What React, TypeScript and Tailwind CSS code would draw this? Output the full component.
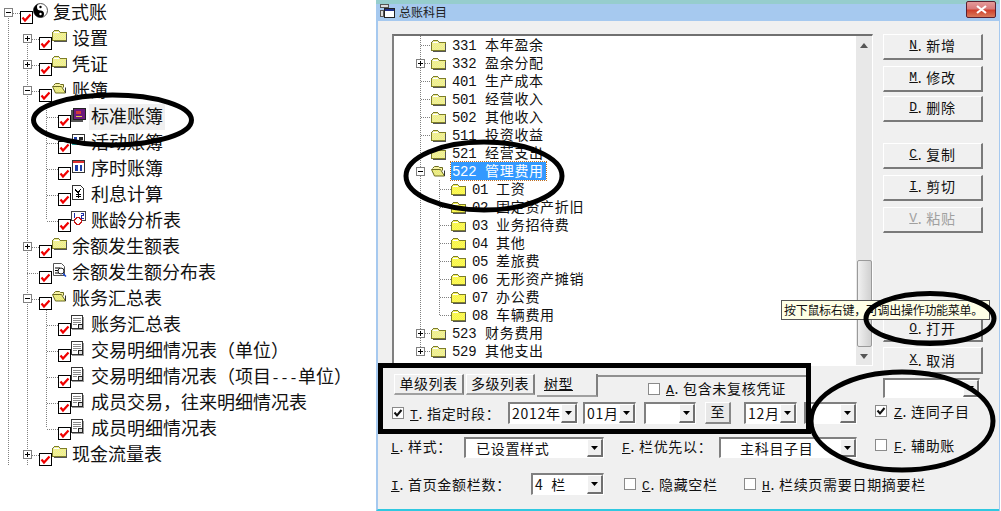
const cjk = "font-['Noto_Sans_CJK_SC',sans-serif]";

type Ico = 'yin' | 'folder' | 'open' | 'book' | 'act' | 'cal' | 'yen' | 'clock' | 'doc' | 'find';

const ledger: { level: number; exp?: '+' | '-'; icon: Ico; text: string; sel?: boolean }[] = [
  { level: 0, exp: '-', icon: 'yin', text: '复式账' },
  { level: 1, exp: '+', icon: 'folder', text: '设置' },
  { level: 1, exp: '+', icon: 'folder', text: '凭证' },
  { level: 1, exp: '-', icon: 'open', text: '账簿' },
  { level: 2, icon: 'book', text: '标准账簿', sel: true },
  { level: 2, icon: 'act', text: '活动账簿' },
  { level: 2, icon: 'cal', text: '序时账簿' },
  { level: 2, icon: 'yen', text: '利息计算' },
  { level: 2, icon: 'clock', text: '账龄分析表' },
  { level: 1, exp: '+', icon: 'folder', text: '余额发生额表' },
  { level: 1, icon: 'find', text: '余额发生额分布表' },
  { level: 1, exp: '-', icon: 'open', text: '账务汇总表' },
  { level: 2, icon: 'doc', text: '账务汇总表' },
  { level: 2, icon: 'doc', text: '交易明细情况表（单位）' },
  { level: 2, icon: 'doc', text: '交易明细情况表（项目---单位）' },
  { level: 2, icon: 'doc', text: '成员交易，往来明细情况表' },
  { level: 2, icon: 'doc', text: '成员明细情况表' },
  { level: 1, exp: '+', icon: 'folder', text: '现金流量表' },
];

const accounts: { code: string; text: string; exp?: '+' | '-'; child?: boolean; open?: boolean; sel?: boolean }[] = [
  { code: '331', text: '本年盈余' },
  { code: '332', text: '盈余分配', exp: '+' },
  { code: '401', text: '生产成本' },
  { code: '501', text: '经营收入' },
  { code: '502', text: '其他收入' },
  { code: '511', text: '投资收益' },
  { code: '521', text: '经营支出' },
  { code: '522', text: '管理费用', exp: '-', open: true, sel: true },
  { code: '01', text: '工资', child: true },
  { code: '02', text: '固定资产折旧', child: true },
  { code: '03', text: '业务招待费', child: true },
  { code: '04', text: '其他', child: true },
  { code: '05', text: '差旅费', child: true },
  { code: '06', text: '无形资产摊销', child: true },
  { code: '07', text: '办公费', child: true },
  { code: '08', text: '车辆费用', child: true },
  { code: '523', text: '财务费用', exp: '+' },
  { code: '529', text: '其他支出', exp: '+' },
];

function Expander({ type }: { type?: '+' | '-' }) {
  if (!type) return <span className="block w-[9px] h-[9px] shrink-0" />;
  return (
    <svg width="9" height="9" viewBox="0 0 9 9" className="block shrink-0" shapeRendering="crispEdges">
      <rect x="0.5" y="0.5" width="8" height="8" fill="#fff" stroke="#808080" />
      <path d="M2 4.5h5" stroke="#000" />
      {type === '+' && <path d="M4.5 2v5" stroke="#000" />}
    </svg>
  );
}

function RedCheck() {
  return (
    <svg width="13" height="13" viewBox="0 0 13 13" className="block shrink-0">
      <rect x="0.5" y="0.5" width="12" height="12" fill="#fff" stroke="#000" />
      <path d="M2.5 6.5l2.5 3 5.5-6" fill="none" stroke="#f00000" strokeWidth="2.2" />
    </svg>
  );
}

function Dither({ id, a, b }: { id: string; a: string; b: string }) {
  return (
    <defs>
      <pattern id={id} width="2" height="2" patternUnits="userSpaceOnUse">
        <rect width="2" height="2" fill={a} />
        <rect width="1" height="1" fill={b} />
        <rect x="1" y="1" width="1" height="1" fill={b} />
      </pattern>
    </defs>
  );
}

function Folder({ open, solid }: { open?: boolean; solid?: boolean }) {
  if (open) {
    return (
      <svg width="15" height="14" viewBox="0 0 15 14" className="block shrink-0">
        <Dither id="dOpen" a="#ffff66" b="#d8d8a0" />
        <path d="M1.5 4.5l2-2h4l1 1h3v3" fill="#f6f2a0" stroke="#6b6b20" />
        <path d="M0.5 5.5h9l4 6.5h-10z" fill="url(#dOpen)" stroke="#6b6b20" />
        <path d="M13.5 6.5v5.5" stroke="#333" />
      </svg>
    );
  }
  const id = solid ? 'dSolid' : 'dPale';
  return (
    <svg width="15" height="13" viewBox="0 0 15 13" className="block shrink-0" shapeRendering="crispEdges">
      {solid ? <Dither id={id} a="#ffff33" b="#f4ee70" /> : <Dither id={id} a="#ffff66" b="#e0e0c0" />}
      <path d="M0.5 11.5v-8l2-2h4l2 2h5.5v8z" fill={`url(#${id})`} stroke="#7d7d2a" />
      <path d="M1.5 12.5h13.5M14.5 4.5v8" stroke="#555" />
      <path d="M1.5 3.5h5" stroke="#fff" />
    </svg>
  );
}

function LedgerIcon({ icon }: { icon: Ico }) {
  if (icon === 'folder') return <Folder />;
  if (icon === 'open') return <Folder open />;
  if (icon === 'yin') {
    return (
      <svg width="15" height="15" viewBox="0 0 15 15" className="block shrink-0">
        <circle cx="7.5" cy="7.5" r="7" fill="#fff" stroke="#555" />
        <path d="M7.5 0.5a7 7 0 0 0 0 14a3.5 3.5 0 0 0 0-7a3.5 3.5 0 0 1 0-7z" fill="#000" />
        <circle cx="7.5" cy="4" r="1.2" fill="#000" />
        <circle cx="7.5" cy="11" r="1.2" fill="#fff" />
      </svg>
    );
  }
  if (icon === 'book') {
    return (
      <svg width="15" height="15" viewBox="0 0 15 15" className="block shrink-0" shapeRendering="crispEdges">
        <path d="M2 1h12v11h-12z" fill="#6c1a7c" stroke="#222" />
        <path d="M1 3v11h11" fill="none" stroke="#555" strokeWidth="1.5" />
        <path d="M5 4h5v3h-5z" fill="#d23a3a" />
        <path d="M5 9h6" stroke="#e6c84a" />
      </svg>
    );
  }
  if (icon === 'act') {
    return (
      <svg width="15" height="15" viewBox="0 0 15 15" className="block shrink-0" shapeRendering="crispEdges">
        <rect x="1.5" y="1.5" width="12" height="10" fill="#fff" stroke="#333" />
        <path d="M3 4h3v3h-3z" fill="#1f3fa8" />
        <path d="M8 4h4v3h-4z" fill="#222" />
        <path d="M1 9h5v3h-5z" fill="#28b0b0" />
      </svg>
    );
  }
  if (icon === 'cal') {
    return (
      <svg width="15" height="15" viewBox="0 0 15 15" className="block shrink-0" shapeRendering="crispEdges">
        <rect x="1.5" y="1.5" width="12" height="12" fill="#fff" stroke="#333" />
        <path d="M2 2h11v2h-11z" fill="#e03030" />
        <path d="M4 6h3v6h-3z" fill="#1f3fa8" />
        <path d="M9 6h2v6h-2z" fill="#1f3fa8" />
      </svg>
    );
  }
  if (icon === 'yen') {
    return (
      <svg width="15" height="15" viewBox="0 0 15 15" className="block shrink-0" shapeRendering="crispEdges">
        <path d="M1.5 0.5h8l3 3v11h-11z" fill="#fff" stroke="#333" />
        <path d="M4 4l3 4l3-4M7 8v5M4.5 9h5M4.5 11h5" fill="none" stroke="#000" />
      </svg>
    );
  }
  if (icon === 'clock') {
    return (
      <svg width="15" height="15" viewBox="0 0 15 15" className="block shrink-0" shapeRendering="crispEdges">
        <rect x="0.5" y="0.5" width="14" height="9" fill="#fff" stroke="#444" />
        <path d="M3 2v5M10 2h2v2h-2v3h3" fill="none" stroke="#1f2fa8" />
        <circle cx="7" cy="10" r="3.5" fill="#fff" stroke="#c81818" strokeWidth="1.5" />
      </svg>
    );
  }
  if (icon === 'find') {
    return (
      <svg width="16" height="15" viewBox="0 0 16 15" className="block shrink-0">
        <path d="M1.5 0.5h8l3 3v9h-11z" fill="#fff" stroke="#555" />
        <path d="M3 5h5M3 7.5h3M3 10h5" stroke="#000" />
        <circle cx="9" cy="8" r="3" fill="#fff" stroke="#222" />
        <path d="M11 10.5l3 3" stroke="#1545d0" strokeWidth="1.5" />
      </svg>
    );
  }
  return (
    <svg width="15" height="15" viewBox="0 0 15 15" className="block shrink-0" shapeRendering="crispEdges">
      <path d="M0.5 0.5h11v13h-11z" fill="#fff" stroke="#333" />
      <path d="M2 3h8M2 5h8M2 7h8M2 9h4" stroke="#8a8a8a" />
      <path d="M1 14.5h11M12.5 2v13" stroke="#999" />
      <rect x="7.5" y="9.5" width="4" height="4" fill="#ddd" stroke="#222" />
    </svg>
  );
}

function LedgerRow({ item }: { item: (typeof ledger)[number] }) {
  const pad = ['pl-[4px]', 'pl-[23px]', 'pl-[42px]'][item.level];
  const parts = item.text.split('---');
  return (
    <div className={`flex h-[26px] ${pad}`}>
      <span className="mt-[8px] w-[9px] shrink-0"><Expander type={item.exp} /></span>
      <span className="mt-[11px] ml-[7px] w-[13px] shrink-0"><RedCheck /></span>
      <span className="mt-[3px] w-[15px] shrink-0"><LedgerIcon icon={item.icon} /></span>
      <span
        className={`ml-[3px] px-[2px] h-[26px] leading-[23px] text-[18px] whitespace-nowrap text-[#111] ${item.sel ? 'bg-[#f0f0f0]' : ''}`}
      >
        {parts[0]}
        {parts.length > 1 && <span className="font-['Liberation_Mono',monospace] text-[15px]">---</span>}
        {parts[1]}
      </span>
    </div>
  );
}

function AccountRow({ item }: { item: (typeof accounts)[number] }) {
  return (
    <div className={`flex h-[18px] items-center ${item.child ? 'pl-[57px]' : 'pl-[22px]'}`}>
      {!item.child && <Expander type={item.exp} />}
      <span className={`w-[15px] shrink-0 ${item.child ? '' : 'ml-[6px]'}`}>
        <Folder open={item.open} solid={item.child} />
      </span>
      <span
        className={`flex items-baseline h-[18px] ml-[5px] pl-[1px] pr-[1px] w-[95px] whitespace-nowrap text-[14px] leading-[16px] tracking-[0.7px] ${
          item.sel ? 'bg-[#3399ff] text-white outline-1 outline-dotted outline-[#c07020]' : 'text-[#111]'
        }`}
      >
        <span className={`${item.child ? 'w-[24px]' : 'w-[33px]'} shrink-0 font-['Liberation_Mono',monospace] text-[14px] tracking-[-0.3px]`}>
          {item.code}
        </span>
        <span>{item.text}</span>
      </span>
    </div>
  );
}

function SideButton({ k, text, disabled, className = '' }: { k: string; text: string; disabled?: boolean; className?: string }) {
  return (
    <div
      className={`flex h-[26px] w-[100px] items-center justify-center border-t border-l border-t-white border-l-white border-r-2 border-b-2 border-r-[#7a7a7a] border-b-[#7a7a7a] bg-[#f0f0f0] pb-[2px] text-[14px] tracking-[0.7px] ${
        disabled ? 'text-[#a0a0a0]' : 'text-[#111]'
      } ${className}`}
    >
      <u className="font-['Liberation_Mono',monospace] text-[13px]">{k}</u>.&nbsp;{text}
    </div>
  );
}

function Combo({ value, className = '', textClass = 'pl-[2px]' }: { value?: string; className?: string; textClass?: string }) {
  return (
    <div
      className={`flex shrink-0 items-stretch border-t-2 border-l-2 border-t-[#808080] border-l-[#808080] border-r border-b border-r-white border-b-white bg-white text-[14px] tracking-[0.7px] text-[#111] ${className}`}
    >
      <span className={`flex-1 whitespace-pre leading-[18px] ${textClass}`}>{value}</span>
      <span className="flex w-[16px] items-center justify-center border-r-2 border-b-2 border-r-[#707070] border-b-[#707070] border-t border-l border-t-white border-l-white bg-[#f0f0f0]">
        <svg width="7" height="4" viewBox="0 0 7 4"><path d="M0 0h7L3.5 4z" fill="#000" /></svg>
      </span>
    </div>
  );
}

function Check({ on }: { on?: boolean }) {
  return (
    <svg width="12" height="12" viewBox="0 0 12 12" className="block shrink-0" shapeRendering="crispEdges">
      <rect x="0.5" y="0.5" width="11" height="11" fill="#fff" stroke="#8a8a8a" />
      {on && <path d="M2.5 5.5l2.5 3 4.5-5.5" fill="none" stroke="#111" strokeWidth="2" shapeRendering="auto" />}
    </svg>
  );
}

function Label({ k, text, className = '' }: { k: string; text: string; className?: string }) {
  return (
    <span className={`whitespace-nowrap text-[14px] tracking-[0.7px] text-[#111] ${className}`}>
      <u className="font-['Liberation_Mono',monospace] text-[13px]">{k}</u>.&nbsp;{text}
    </span>
  );
}

function Tab({ text, className = '' }: { text: string; className?: string }) {
  return (
    <div
      className={`flex h-[21px] items-center justify-center border-t border-l border-t-white border-l-white border-r-2 border-b-2 border-r-[#808080] border-b-[#a0a0a0] bg-[#f0f0f0] pb-[2px] text-[14px] tracking-[0.5px] text-[#111] ${className}`}
    >
      {text}
    </div>
  );
}

export default function App() {
  return (
    <div className={`relative flex h-[511px] w-[1001px] overflow-hidden bg-white ${cjk}`}>
      {/* left tree */}
      <div className="relative w-[376px] shrink-0">
        <svg width="376" height="511" className="absolute left-0 top-0" shapeRendering="crispEdges">
          <g stroke="#808080" strokeDasharray="1 1" fill="none">
            <path d="M8.5 18v447M27.5 44v421M46.5 104v116M46.5 310v118" />
            <path d="M13 13h7M32 39h7M32 65h7M32 91h7M32 247h7M27 273h12M32 299h7M32 455h7" />
            <path d="M47 117h11M47 143h11M47 169h11M47 195h11M47 221h11M47 325h11M47 351h11M47 377h11M47 403h11M47 429h11" />
          </g>
        </svg>
        <div className="relative">
          {ledger.map((it) => (
            <LedgerRow key={it.text + it.level + it.icon} item={it} />
          ))}
        </div>
      </div>

      {/* dialog */}
      <div className="flex w-[624px] shrink-0 flex-col border-r border-r-[#a6c9ef]">
        <div className="h-[4px] bg-[#96cdcd]" />
        <div className="flex h-[17px] items-center bg-[#a6c9ef]">
          <svg width="15" height="14" viewBox="0 0 15 14" className="ml-[4px] mt-[-3px]" shapeRendering="crispEdges">
            <path d="M0.5 0.5h8v3h-8zM0.5 6.5h3v6h-3z" fill="#ddd" stroke="#555" />
            <rect x="4.5" y="4.5" width="10" height="9" fill="#fff" stroke="#222" />
            <path d="M5 5h9v2h-9z" fill="#20308a" />
          </svg>
          <span className="ml-[4px] mt-[-1px] text-[12px] text-[#222]">总账科目</span>
          <div className="ml-auto mr-[3px] mt-[-6px] flex h-[17px] w-[30px] items-center justify-center rounded-[2px] border border-[#5a2030] bg-[linear-gradient(#e49a9a_0%,#d87a7a_45%,#d0402c_55%,#d87a5a_100%)]">
            <svg width="11" height="9" viewBox="0 0 11 9"><path d="M1 1l9 7M10 1l-9 7" stroke="#fff" strokeWidth="2.2" /></svg>
          </div>
        </div>

        <div className="flex flex-1 flex-col border-l-2 border-b-2 border-l-[#a6c9ef] border-b-[#30c8e0] bg-[#f0f0f0]">
          <div className="flex h-[353px] pl-[14px] pt-[13px]">
            {/* account list */}
            <div className="relative h-[332px] w-[481px] shrink-0 border-t-2 border-l-2 border-t-[#707070] border-l-[#808080] border-r border-b border-r-white border-b-white bg-white">
              <svg width="464" height="330" className="absolute left-0 top-0" shapeRendering="crispEdges">
                <g stroke="#808080" strokeDasharray="1 1" fill="none">
                  <path d="M26.5 0v315M45.5 144v135" />
                  <path d="M27 9h10M31 27h6M27 45h10M27 63h10M27 81h10M27 99h10M27 117h10" />
                  <path d="M46 153h11M46 171h11M46 189h11M46 207h11M46 225h11M46 243h11M46 261h11M46 279h11M31 297h6M31 315h6" />
                </g>
              </svg>
              <div className="relative">
                {accounts.map((it) => (
                  <AccountRow key={it.code} item={it} />
                ))}
              </div>
              {/* scrollbar */}
              <div className="absolute right-0 top-0 flex h-full w-[16px] flex-col items-center bg-[#e8e8e8]">
                <svg width="8" height="5" viewBox="0 0 8 5" className="mt-[7px]"><path d="M0 5h8L4 0z" fill="#555" /></svg>
                <div className="mt-[212px] h-[87px] w-[15px] rounded-[2px] border border-[#9a9a9a] bg-[linear-gradient(90deg,#f0f0f0,#d0d0d0)]" />
                <svg width="8" height="5" viewBox="0 0 8 5" className="mt-[7px]"><path d="M0 0h8L4 5z" fill="#555" /></svg>
              </div>
            </div>

            {/* buttons */}
            <div className="ml-[10px] flex flex-col">
              <SideButton k="N" text="新增" />
              <SideButton k="M" text="修改" className="mt-[6px]" />
              <SideButton k="D" text="删除" className="mt-[4px]" />
              <SideButton k="C" text="复制" className="mt-[21px]" />
              <SideButton k="I" text="剪切" className="mt-[6px]" />
              <SideButton k="V" text="粘贴" disabled className="mt-[6px]" />
              <SideButton k="O" text="打开" className="mt-[83px] !pb-0" />
              <SideButton k="X" text="取消" className="mt-[5px] !h-[27px] !pb-0" />
            </div>
          </div>

          {/* tab row */}
          <div className="flex h-[28px] items-start pl-[16px]">
            <Tab text="单级列表" className="w-[70px]" />
            <Tab text="多级列表" className="ml-[2px] w-[69px]" />
            <div className="ml-[2px] flex h-[23px] w-[61px] items-center border-r-2 border-b-2 border-r-[#808080] border-b-[#a0a0a0] pb-[2px] pl-[7px] text-[14px] tracking-[0.5px] text-[#111]">
              <u>树型</u>
            </div>
            <div className="mt-[1px] flex h-[26px] w-[212px] items-center border-t-2 border-t-[#909090] pl-[50px]">
              <Check />
              <Label k="A" text="包含未复核凭证" className="ml-[6px]" />
            </div>
            <Combo className="ml-[73px] mt-[4px] h-[20px] w-[97px]" />
          </div>

          {/* period row */}
          <div className="flex h-[35px] items-start pl-[14px]">
            <span className="mt-[5px]"><Check on /></span>
            <Label k="T" text="指定时段：" className="ml-[6px] mt-[1px] w-[98px]" />
            <Combo value="2012年" className="h-[22px] w-[70px]" />
            <Combo value="01月" className="ml-[5px] h-[22px] w-[53px]" />
            <Combo className="ml-[8px] h-[22px] w-[52px]" />
            <div className="ml-[9px] flex h-[22px] w-[26px] shrink-0 items-center justify-center border-t border-l border-t-white border-l-white border-r-2 border-b-2 border-r-[#888] border-b-[#888] bg-[#e8e8e8] pb-[2px] text-[14px] text-[#111]">
              至
            </div>
            <Combo value="12月" className="ml-[13px] h-[22px] w-[53px]" />
            <Combo className="ml-[7px] h-[22px] w-[53px]" />
            <span className="ml-[18px] mt-[3px]"><Check on /></span>
            <Label k="Z" text="连同子目" className="ml-[7px] mt-[-1px]" />
          </div>

          {/* style row */}
          <div className="flex h-[36px] items-start pl-[13px]">
            <Label k="L" text="样式：" className="mt-[-1px] w-[73px]" />
            <Combo value="已设置样式" textClass="pl-[10px]" className="h-[21px] w-[140px]" />
            <Label k="F" text="栏优先以：" className="ml-[18px] mt-[-1px] w-[97px]" />
            <Combo value="主科目子目" textClass="pl-[19px]" className="h-[21px] w-[138px]" />
            <span className="ml-[18px] mt-[2px]"><Check /></span>
            <Label k="F" text="辅助账" className="ml-[7px] mt-[-2px]" />
          </div>

          {/* first page row */}
          <div className="flex items-start pl-[13px]">
            <Label k="I" text="首页金额栏数：" className="mt-[1px] w-[140px]" />
            <Combo value="4  栏" className="h-[22px] w-[73px]" />
            <span className="ml-[20px] mt-[5px]"><Check /></span>
            <Label k="C" text="隐藏空栏" className="ml-[6px] mt-[1px] w-[102px]" />
            <span className="mt-[5px]"><Check /></span>
            <Label k="H" text="栏续页需要日期摘要栏" className="ml-[6px] mt-[1px]" />
          </div>
        </div>
      </div>

      {/* tooltip */}
      <div className="absolute left-[781px] top-[300px] flex h-[20px] w-[209px] items-center border border-[#555] bg-[#ffffe6] pl-[2px] text-[12px] tracking-[-0.3px] whitespace-nowrap text-[#111]">
        按下鼠标右键，可调出操作功能菜单。
      </div>

      {/* hand-drawn marks */}
      <svg width="1001" height="511" className="pointer-events-none absolute left-0 top-0" fill="none" stroke="#000">
        <ellipse cx="112.5" cy="120" rx="79" ry="25" strokeWidth="5" />
        <ellipse cx="484" cy="176" rx="78" ry="34" strokeWidth="5" />
        <ellipse cx="930" cy="318.5" rx="64" ry="25" strokeWidth="5" />
        <ellipse cx="902" cy="421" rx="91" ry="49" strokeWidth="5" />
        <rect x="380.5" y="365.5" width="428" height="66" strokeWidth="5" />
      </svg>
    </div>
  );
}
